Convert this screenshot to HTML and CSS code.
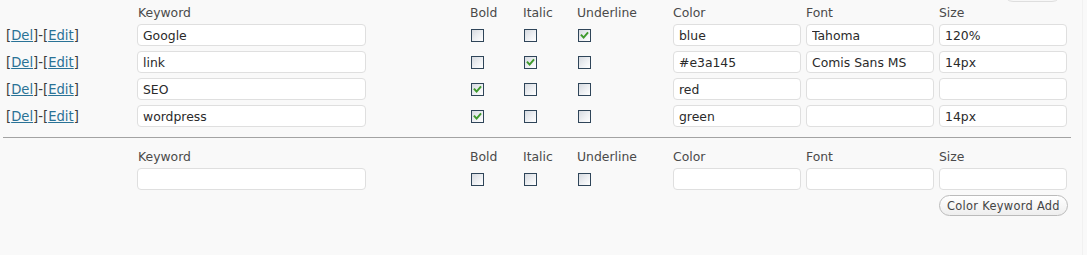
FILE: index.html
```html
<!DOCTYPE html>
<html>
<head>
<meta charset="utf-8">
<link rel="stylesheet" href="styles.css">
</head>
<body>
<div class="page">
  <div class="top-edge"></div>
  <div class="grid head">
    <span></span><span>Keyword</span><span>Bold</span><span>Italic</span><span>Underline</span><span>Color</span><span>Font</span><span>Size</span>
  </div>

  <div class="grid row">
    <span class="links">[<a href="#">Del</a>]-[<a href="#">Edit</a>]</span>
    <span><input class="txt kw" value="Google"></span>
    <span><span class="cb"></span></span>
    <span><span class="cb"></span></span>
    <span><span class="cb"><svg viewBox="0 0 11 11"><path d="M2.6 5.4 L4.6 7.6 L8.4 3.2"/></svg></span></span>
    <span><input class="txt" value="blue"></span>
    <span><input class="txt" value="Tahoma"></span>
    <span><input class="txt" value="120%"></span>
  </div>

  <div class="grid row">
    <span class="links">[<a href="#">Del</a>]-[<a href="#">Edit</a>]</span>
    <span><input class="txt kw" value="link"></span>
    <span><span class="cb"></span></span>
    <span><span class="cb"><svg viewBox="0 0 11 11"><path d="M2.6 5.4 L4.6 7.6 L8.4 3.2"/></svg></span></span>
    <span><span class="cb"></span></span>
    <span><input class="txt" value="#e3a145"></span>
    <span><input class="txt" value="Comis Sans MS"></span>
    <span><input class="txt" value="14px"></span>
  </div>

  <div class="grid row">
    <span class="links">[<a href="#">Del</a>]-[<a href="#">Edit</a>]</span>
    <span><input class="txt kw" value="SEO"></span>
    <span><span class="cb"><svg viewBox="0 0 11 11"><path d="M2.6 5.4 L4.6 7.6 L8.4 3.2"/></svg></span></span>
    <span><span class="cb"></span></span>
    <span><span class="cb"></span></span>
    <span><input class="txt" value="red"></span>
    <span><input class="txt" value=""></span>
    <span><input class="txt" value=""></span>
  </div>

  <div class="grid row">
    <span class="links">[<a href="#">Del</a>]-[<a href="#">Edit</a>]</span>
    <span><input class="txt kw" value="wordpress"></span>
    <span><span class="cb"><svg viewBox="0 0 11 11"><path d="M2.6 5.4 L4.6 7.6 L8.4 3.2"/></svg></span></span>
    <span><span class="cb"></span></span>
    <span><span class="cb"></span></span>
    <span><input class="txt" value="green"></span>
    <span><input class="txt" value=""></span>
    <span><input class="txt" value="14px"></span>
  </div>

  <div class="sep"></div>

  <div class="grid head">
    <span></span><span>Keyword</span><span>Bold</span><span>Italic</span><span>Underline</span><span>Color</span><span>Font</span><span>Size</span>
  </div>
  <div class="grid row">
    <span></span>
    <span><input class="txt kw" value=""></span>
    <span><span class="cb"></span></span>
    <span><span class="cb"></span></span>
    <span><span class="cb"></span></span>
    <span><input class="txt" value=""></span>
    <span><input class="txt" value=""></span>
    <span><input class="txt" value=""></span>
  </div>
  <div class="grid btnrow">
    <span></span><span></span><span></span><span></span><span></span><span></span><span></span>
    <span><button class="btn">Color Keyword Add</button></span>
  </div>
</div>
</body>
</html>
```

FILE: styles.css
```css
html, body {
  margin: 0;
  padding: 0;
  background: #f9f9f9;
}
body {
  font-family: "DejaVu Sans", Verdana, sans-serif;
  color: #333;
}
.page {
  position: relative;
  width: 1083px;
  height: 255px;
  border-right: 1px solid #f1f1f1;
  box-sizing: border-box;
  padding-left: 6px;
}
.top-edge {
  position: absolute;
  left: 1003px;
  top: -18px;
  width: 59px;
  height: 20px;
  border: 1px solid #dedede;
  border-radius: 10px;
  box-sizing: border-box;
  background: #f7f7f7;
}
.grid {
  display: grid;
  grid-template-columns: 131px 333px 53px 54px 96px 133px 133px 129px;
  align-items: center;
}
.head {
  height: 24px;
  font-size: 12.4px;
  color: #4a4a4a;
}
.head span:nth-child(2) { padding-left: 1px; }
.row {
  height: 22px;
  margin-bottom: 5px;
}
.links {
  font-size: 13.2px;
  color: #3a3a3a;
  white-space: nowrap;
}
.links a {
  color: #2a7296;
  text-decoration: underline;
}
.txt {
  display: block;
  box-sizing: border-box;
  width: 128px;
  height: 22px;
  margin: 0;
  padding: 0 5px;
  border: 1px solid #dfdfdf;
  border-radius: 4px;
  background: #fff;
  font-family: "DejaVu Sans", Verdana, sans-serif;
  font-size: 12.4px;
  color: #2a2a2a;
  outline: none;
}
.txt.kw { width: 229px; }
.cb {
  display: block;
  box-sizing: border-box;
  width: 13px;
  height: 13px;
  margin-left: 1px;
  border: 1px solid #2f4559;
  background: linear-gradient(135deg, #d6dae0 0%, #eef0f3 55%, #ffffff 100%);
}
.cb svg {
  display: block;
  width: 11px;
  height: 11px;
}
.cb svg path {
  fill: none;
  stroke: #3f9a2c;
  stroke-width: 2;
  stroke-linecap: square;
}
.sep {
  margin: 10px 0 0 -3px;
  width: 1068px;
  height: 1px;
  background: #a3a3a3;
  margin-bottom: 6px;
}
.btnrow {
  height: 21px;
}
.btn {
  display: block;
  box-sizing: border-box;
  width: 129px;
  height: 21px;
  margin: 0;
  padding: 0;
  border: 1px solid #bbb;
  border-radius: 11px;
  background: linear-gradient(#ffffff, #eeeeee);
  font-family: "DejaVu Sans", Verdana, sans-serif;
  font-size: 11.4px;
  color: #444;
  letter-spacing: 0.3px;
}
```
